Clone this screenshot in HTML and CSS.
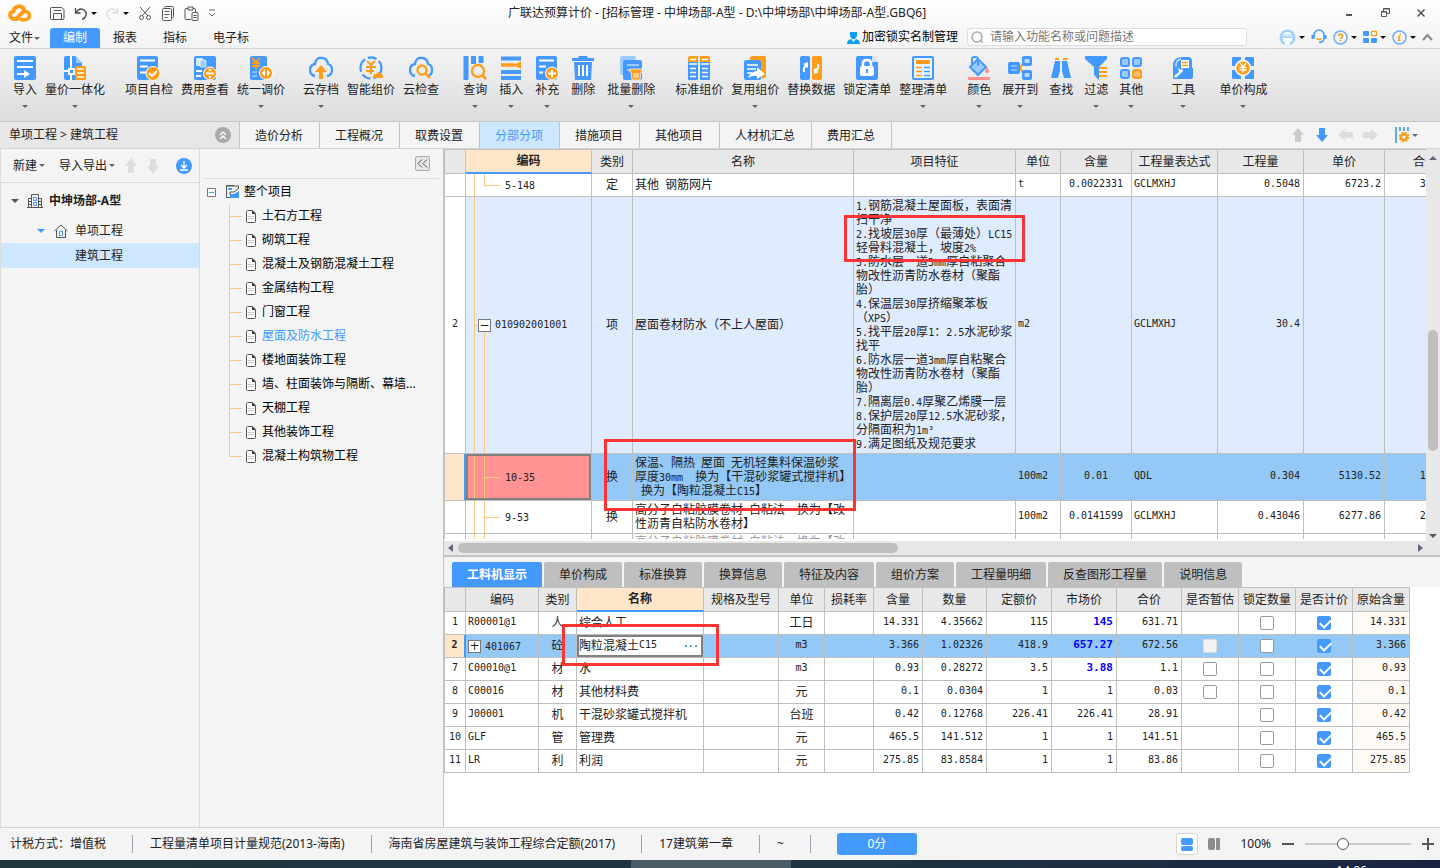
FILE: index.html
```html
<!DOCTYPE html>
<html lang="zh-CN">
<head>
<meta charset="utf-8">
<title>广联达预算计价</title>
<link rel="stylesheet" href="styles.css">
</head>
<body>
<header class="top">
  <div class="titlebar">
    <svg class="logo" width="24" height="18" viewBox="0 0 24 18" fill="none" stroke="#ff9c1a" stroke-width="4" stroke-linecap="round" stroke-linejoin="round"><path d="M9 15H5.500C1 14 1 8 5.500 7.500 6 2 12 1 15 4c3 3-1 5-3 7l-4 4"/><path d="M13 15.500c4 1 8.500 0 8.500-4 0-3-2.500-4-4.500-4" stroke-width="3.500"/></svg>
    <div class="quick">
      <button aria-label="保存"><svg width="15" height="15" viewBox="0 0 15 15" fill="none" stroke="#555"><path d="M.5 2.500q0-1 1-1h10l2.500 2v9q0 1-1 1H1.500q-1 0-1-1zM3.500 13.500v-6h8v6M4 4.500h7"/></svg></button>
      <button aria-label="撤销"><svg width="13" height="15" viewBox="0 0 13 15" fill="none" stroke="#444" stroke-width="1.300"><path d="M1.500 2v5h5M2 6.500c2-3 5-4 7-3s4 3 3 6q-1 3-4 4"/></svg><i class="caret dark"></i></button>
      <button aria-label="恢复"><svg width="13" height="15" viewBox="0 0 13 15" fill="none" stroke="#ddd" stroke-width="1.300"><path d="M11.500 2v5h-5M11 6.500c-2-3-5-4-7-3s-4 3-3 6q1 3 4 4"/></svg><i class="caret dark"></i></button>
      <button aria-label="剪切"><svg width="14" height="15" viewBox="0 0 14 15" fill="none" stroke="#555"><path d="M2 1l8 9M12 1l-8 9"/><circle cx="3.500" cy="11.500" r="2"/><circle cx="10.500" cy="11.500" r="2"/></svg></button>
      <button aria-label="复制"><svg width="14" height="15" viewBox="0 0 14 15" fill="none" stroke="#555"><path d="M3.500 3V1.500q0-1 1-1h7q1 0 1 1v9q0 1-1 1h-1"/><rect x="1.500" y="2.500" width="9" height="12" rx="1"/><path d="M3.500 5.500h5M3.500 8.500h5M3.500 11.500h3"/></svg></button>
      <button aria-label="粘贴"><svg width="15" height="15" viewBox="0 0 15 15" fill="none" stroke="#555"><path d="M7 13.500H2q-1 0-1-1v-9q0-1 1-1h2M9 2.500h1.500q1 0 1 1V6M4 1h5v3H4z"/><rect x="8" y="6.500" width="6" height="8" rx="1"/><path d="M9.500 9.500h3M9.500 11.500h3"/></svg></button>
      <button aria-label="更多"><svg width="8" height="8" viewBox="0 0 8 8" fill="none" stroke="#666"><path d="M1 1h6M1 4l3 3 3-3"/></svg></button>
    </div>
    <h1 class="wintitle">广联达预算计价 - [招标管理 - 中坤场部-A型 - D:\中坤场部\中坤场部-A型.GBQ6]</h1>
    <div class="winbtns">
      <button aria-label="最小化"><svg width="10" height="10" viewBox="0 0 10 10"><path d="M2 7h6" stroke="#555" stroke-width="2"/></svg></button>
      <button aria-label="还原"><svg width="10" height="10" viewBox="0 0 10 10" fill="none" stroke="#555"><path d="M3.500 3V.5h6v5H7M1.500 3.500h5v5h-5zM3 1h7M1 4h6"/></svg></button>
      <button aria-label="关闭"><svg width="10" height="10" viewBox="0 0 10 10"><path d="M1.500 1.500l7 7M8.500 1.500l-7 7" stroke="#444" stroke-width="1.300"/></svg></button>
    </div>
  </div>
  <div class="menubar">
    <nav class="menu">
      <button class="file">文件<i class="caret"></i></button>
      <button class="on">编制</button><button>报表</button><button>指标</button><button>电子标</button>
    </nav>
    <a class="lock" href="#"><svg width="13" height="13" viewBox="0 0 13 13" fill="#0a9ff0"><path d="M3 1h7v4L8 8H5L3 5z"/><path d="M0 13q0-4 4-5l2.500 3L9 8q4 1 4 5z"/></svg>加密锁实名制管理</a>
    <label class="search"><svg width="13" height="13" viewBox="0 0 13 13" fill="none" stroke="#aaa" stroke-width="1.500"><circle cx="6" cy="6" r="5"/><path d="M9.500 9.500L12 12"/></svg><input type="text" aria-label="搜索" placeholder="请输入功能名称或问题描述"></label>
    <div class="tools">
      <button aria-label="账户"><svg width="17" height="17" viewBox="0 0 17 17"><circle cx="8.500" cy="8.500" r="8" fill="#a5cffa"/><path d="M4 8q0-5 4.500-5T13 8v4q-1 1-2 1v3H6v-3q-1 0-2-1z" fill="#fff"/><path d="M4 5.500q4.500-2 9 0v3H4z" fill="#d3e8fd"/><path d="M5 8q3.500 1 7 0" stroke="#84bdf8" fill="none"/></svg><i class="caret dark"></i></button>
      <button aria-label="客服"><svg width="16" height="16" viewBox="0 0 16 16" fill="none" stroke="#49f" stroke-width="1.500"><path d="M3 8V6a5 5 0 0 1 10 0v2M13 9q0 4.500-5 4.500"/><path d="M2 6v4M14 6v4" stroke-width="3"/><path d="M5.500 9.500q2.500 2 5 0" stroke="#ff9c1a"/></svg></button>
      <button aria-label="帮助"><svg width="15" height="15" viewBox="0 0 15 15" fill="none" stroke="#6ab0f8" stroke-width="1.500"><circle cx="7.500" cy="7.500" r="6.500"/><path d="M5.500 6q0-2 2-2t2 2-2 2.500v.5M7.500 10v1.500" stroke="#ff9c1a"/></svg><i class="caret dark"></i></button>
      <button aria-label="应用"><svg width="14" height="14" viewBox="0 0 14 14" fill="#49f"><rect x="0" y="1" width="6" height="5" rx="1"/><rect x="0" y="8" width="6" height="5" rx="1"/><rect x="8" y="8" width="6" height="5" rx="1"/><rect x="8.500" y="1.500" width="5" height="4" fill="#fff" stroke="#ff9c1a" stroke-width="1.300"/></svg><i class="caret dark"></i></button>
      <button aria-label="关于"><svg width="15" height="15" viewBox="0 0 15 15" fill="none" stroke="#6ab0f8" stroke-width="1.500"><circle cx="7.500" cy="7.500" r="6.500"/><path d="M8.500 3.500l-.3 1.500M6 6.500h1.500l-.8 4H8.500" stroke="#ff9c1a"/></svg><i class="caret dark"></i></button>
      <button aria-label="收起功能区"><svg width="11" height="8" viewBox="0 0 11 8" fill="none" stroke="#888" stroke-width="2"><path d="M1 7l4.500-5L10 7"/></svg></button>
    </div>
  </div>
</header>

<div class="ribbon">
  <div class="group">
    <button><svg viewBox="0 0 24 24"><rect x="1" width="22" height="24" rx="2" fill="#49f"/><path d="M4 5h16M4 11h16" stroke="#fff" stroke-width="2"/><path d="M4 18h8" stroke="#fff" stroke-width="2"/><path d="M11 14l6 4-6 4z" fill="#fff"/></svg>导入<i class="caret"></i></button>
    <button><svg viewBox="0 0 24 24"><path d="M1 2q0-2 2-2h9l7 7v17H3q-2 0-2-2z" fill="#49f"/><path d="M13 0l6 7h-6z" fill="#9cccff"/><path d="M8 0v24M1 15h14" stroke="#fff" stroke-width="2"/><rect x="6" y="13" width="5" height="5" fill="#49f" stroke="#fff" stroke-width="2"/><rect x="12" y="10" width="11" height="14" rx="2" fill="#ff9c1a"/><path d="M14 13h7M14 17h7M14 21h7" stroke="#fff" stroke-width="1.500"/></svg>量价一体化<i class="caret"></i></button>
  </div>
  <div class="group">
    <button><svg viewBox="0 0 24 24"><rect width="21" height="24" rx="2" fill="#49f"/><path d="M3 4.500h15M3 10.500h8M3 16.500h6" stroke="#fff" stroke-width="2"/><circle cx="16" cy="17.500" r="7" fill="#ff9c1a" stroke="#fff"/><path d="M12 17l3 3 5-5" stroke="#fff" stroke-width="2" fill="none"/></svg>项目自检<i class="caret none"></i></button>
    <button><svg viewBox="0 0 24 24"><rect x="1" width="22" height="24" rx="2" fill="#49f"/><rect x="3" y="2" width="7" height="8" rx="1" fill="#d5eaff"/><rect x="7" y="4" width="6" height="7" rx="1" fill="#9cccff" stroke="#fff" stroke-width=".7"/><path d="M3 15h6M3 20h5" stroke="#fff" stroke-width="2"/><circle cx="17" cy="17.500" r="6.500" fill="#ff9c1a" stroke="#fff"/><path d="M13 17.500h8" stroke="#fff" stroke-width="2"/><circle cx="17" cy="14" r="1.300" fill="#fff"/><circle cx="17" cy="21" r="1.300" fill="#fff"/></svg>费用查看<i class="caret none"></i></button>
    <button><svg viewBox="0 0 24 24"><rect x="1" width="17" height="24" rx="2" fill="#49f"/><path d="M3 2l4 4 4-4M3 7h8M3 10h8M7 6v7" stroke="#ff9c1a" stroke-width="1.800" fill="none"/><path d="M3 16h5M3 20h5" stroke="#9cccff" stroke-width="1.500"/><circle cx="17" cy="17" r="6.500" fill="#ff9c1a" stroke="#fff"/><path d="M16 21v-8l-3 4zM18 13v8l3-4z" fill="#fff"/></svg>统一调价<i class="caret"></i></button>
  </div>
  <div class="group">
    <button><svg viewBox="0 0 24 24" fill="none"><path d="M6 20q-5-1-5-6t5-6q1-7 7-6 5 0 6 6 4 1 4 6t-5 6" stroke="#49f" stroke-width="2.300"/><path d="M12 9l6 7h-4v7h-4v-7H6z" fill="#ff9c1a"/></svg>云存档<i class="caret"></i></button>
    <button><svg viewBox="0 0 24 24" fill="none"><circle cx="12" cy="12" r="10.500" stroke="#49f" stroke-width="2.300" stroke-dasharray="14 3 9 3"/><path d="M8 5l4 4 4-4M7 11h10M7 15h8M12 9v9" stroke="#ff9c1a" stroke-width="2"/><path d="M14 22q0-4 3-4 3-4 5 0 3 1 2 4z" fill="#ff9c1a"/></svg>智能组价<i class="caret none"></i></button>
    <button><svg viewBox="0 0 24 24" fill="none"><path d="M6 20q-5-1-5-6t5-6q1-7 7-6 5 0 6 6 4 1 4 6t-3 5" stroke="#49f" stroke-width="2.300"/><circle cx="13" cy="14" r="4.500" stroke="#ff9c1a" stroke-width="2.300"/><path d="M16 17l5 5" stroke="#ff9c1a" stroke-width="2.300"/></svg>云检查<i class="caret none"></i></button>
  </div>
  <div class="group wide">
    <button><svg viewBox="0 0 24 24" fill="none"><path d="M3 0v24M10.500 0v8M18 0v7" stroke="#49f" stroke-width="5"/><circle cx="15" cy="15" r="6" fill="#eee" stroke="#ff9c1a" stroke-width="2.300"/><path d="M19 19l4 4" stroke="#ff9c1a" stroke-width="2.500"/></svg>查询<i class="caret"></i></button>
    <button><svg viewBox="0 0 24 24"><path d="M2 2.500h20M2 16h20M2 22h20" stroke="#49f" stroke-width="4"/><path d="M2 9h14" stroke="#ff9c1a" stroke-width="3.500"/><path d="M15 9l7-4v8z" fill="#ff9c1a"/></svg>插入<i class="caret"></i></button>
    <button><svg viewBox="0 0 24 24"><rect x="1" width="21" height="24" rx="2" fill="#49f"/><path d="M4 4.500h15M4 10.500h7M4 16.500h4" stroke="#fff" stroke-width="2"/><circle cx="17" cy="17.500" r="6.500" fill="#ff9c1a" stroke="#fff"/><path d="M13 17.500h8M17 13.500v8" stroke="#fff" stroke-width="2"/></svg>补充<i class="caret"></i></button>
    <button><svg viewBox="0 0 24 24"><path d="M1 2h6l1-2h8l1 2h6v3H1zM3 6h18l-1 18H4z" fill="#49f"/><path d="M8 9v11M12 9v11M16 9v11" stroke="#fff" stroke-width="2"/></svg>删除<i class="caret none"></i></button>
    <button><svg viewBox="0 0 24 24"><rect x="1" width="16" height="19" rx="2" fill="#9cccff"/><rect x="4" y="4" width="19" height="20" rx="2" fill="#49f"/><path d="M8 9h12M8 14h4" stroke="#9cccff" stroke-width="2"/><path d="M11 13h12v3h-1l-1 8h-8l-1-8h-1z" fill="#ff9c1a" stroke="#fff" stroke-width=".7"/><path d="M15 17v5M17 17v5M19 17v5" stroke="#fff"/></svg>批量删除<i class="caret"></i></button>
  </div>
  <div class="group">
    <button><svg viewBox="0 0 24 24"><rect x="1" y="5" width="10" height="19" rx="1" fill="#49f"/><rect x="13" y="5" width="10" height="19" rx="1" fill="#49f"/><path d="M1 2q0-2 2-2h8v6H1zM13 0h8q2 0 2 2v4H13z" fill="#ff9c1a"/><path d="M3 3.500h6M15 3.500h6M2 8h8M14 8h8M3 12.500h6M15 12.500h6M3 16.500h6M15 16.500h6M3 20.500h6M15 20.500h6" stroke="#fff" stroke-width="1.500"/></svg>标准组价<i class="caret none"></i></button>
    <button><svg viewBox="0 0 24 24"><rect x="7" width="16" height="22" rx="2" fill="#ff9c1a"/><rect x="1" y="4" width="17" height="20" rx="2" fill="#49f"/><path d="M4 9h11M4 13h9M4 17h5" stroke="#fff" stroke-width="1.500"/><path d="M5 22q3-7 9-7v-4l8 7-8 5v-3q-4-1-9 2z" fill="#fff"/></svg>复用组价<i class="caret"></i></button>
    <button><svg viewBox="0 0 24 24"><rect x="1" width="10" height="24" rx="2" fill="#49f"/><rect x="13" width="10" height="24" rx="2" fill="#ff9c1a"/><path d="M4 16q-1-5 2-7L4 8l5-2v6L7 11q-2 2-1 5zM20 8q1 5-2 7l2 1-5 2v-6l2 1q2-2 1-5z" fill="#fff"/></svg>替换数据<i class="caret none"></i></button>
    <button><svg viewBox="0 0 24 24"><path d="M1 2q0-2 2-2h14l6 6v16q0 2-2 2H3q-2 0-2-2z" fill="#49f"/><path d="M17 0v6h6z" fill="#cfe6ff"/><path d="M8 11V7q0-3 4-3t4 3v4" stroke="#fff" stroke-width="2.500" fill="none"/><rect x="5" y="10" width="14" height="10" rx="2" fill="#fff"/><path d="M12 13v4" stroke="#49f" stroke-width="2"/></svg>锁定清单<i class="caret none"></i></button>
    <button><svg viewBox="0 0 24 24"><rect x="2" y="1" width="20" height="22" rx="1" fill="#e9f4ff" stroke="#49f" stroke-width="2"/><path d="M5 6h14" stroke="#ff9c1a" stroke-width="4"/><path d="M5 11.500h6M5 15.500h6M5 19.500h6" stroke="#ff9c1a" stroke-width="1.700"/><path d="M13 11.500h6M13 15.500h6M13 19.500h6" stroke="#49f" stroke-width="1.700"/></svg>整理清单<i class="caret"></i></button>
  </div>
  <div class="group mid">
    <button><svg viewBox="0 0 24 24"><path d="M11 3l8 8-8 8-8-8z" fill="#9cccff" stroke="#49f" stroke-width="2"/><path d="M5 8V3q0-2 3-2t3 2v7" fill="none" stroke="#49f" stroke-width="2"/><path d="M20 11q4 6 0 6t0-6z" fill="#ff8f8f"/><path d="M1 22.500h22" stroke="#ff8f8f" stroke-width="3"/></svg>颜色<i class="caret"></i></button>
    <button><svg viewBox="0 0 24 24"><path d="M12 12l5-7M12 12l5 8" stroke="#ff9c1a" stroke-width="2"/><rect y="6" width="12" height="12" rx="2" fill="#49f"/><rect x="14" width="10" height="10" rx="2" fill="#49f"/><rect x="14" y="14" width="10" height="10" rx="2" fill="#49f"/><path d="M3 10h6M3 14h6M17 3.500h4v3h-4zM17 17.500h4v3h-4z" stroke="#b8dbff" fill="#b8dbff"/></svg>展开到<i class="caret"></i></button>
    <button><svg viewBox="0 0 24 24"><path d="M6 5h5v10l-2 7H2zM13 5h5l4 17h-7l-2-7z" fill="#49f"/><path d="M6 3h4M14 3h4" stroke="#ff9c1a" stroke-width="2"/></svg>查找<i class="caret none"></i></button>
    <button><svg viewBox="0 0 24 24"><path d="M1 0h22v3l-8 8v13l-5-5v-8L1 3z" fill="#49f"/><path d="M15 12h8M15 16h8M15 20h8" stroke="#ff9c1a" stroke-width="2"/></svg>过滤<i class="caret"></i></button>
    <button><svg viewBox="0 0 24 24" stroke-width="2" fill="#9cccff" stroke="#49f"><rect x="2" y="2" width="8" height="8" rx="2"/><rect x="14" y="2" width="8" height="8" rx="2"/><rect x="2" y="14" width="8" height="8" rx="2"/><rect x="14" y="14" width="8" height="8" rx="2" fill="#ffbd66" stroke="#ff9c1a"/></svg>其他<i class="caret"></i></button>
  </div>
  <div class="group far">
    <button><svg viewBox="0 0 24 24"><path d="M2 8q1-7 9-7h7q3 1 3 4v7h1v9q0 2-2 2H4q-2 0-2-2z" fill="#49f"/><path d="M5 11V9q0-5 5-6" stroke="#cfe6ff" stroke-width="1.300" fill="none"/><path d="M10 4h8v8h-8z" fill="#fff"/><path d="M11 6.500h6M11 9.500h6" stroke="#ff9c1a" stroke-width="1.500"/><path d="M3 20l5-4-1-4 3 2 1-2 1 3-3 3-4 4z" fill="#fff"/></svg>工具<i class="caret"></i></button>
  </div>
  <div class="group wide">
    <button><svg viewBox="0 0 24 24"><rect x="1" y="1" width="22" height="22" rx="1" fill="#49f"/><path d="M12 0v24M0 12h24" stroke="#eee" stroke-width="4"/><circle cx="12" cy="12" r="7.500" fill="#ff9c1a" stroke="#fff" stroke-width="1.500"/><path d="M9 7l3 4 3-4M8.500 11.500h7M8.500 14h7M12 11v6" stroke="#fff" stroke-width="1.300" fill="none"/></svg>单价构成<i class="caret"></i></button>
  </div>
</div>

<div class="navrow">
  <div class="crumb"><span>单项工程 &gt; 建筑工程</span><button aria-label="收起"><svg width="16" height="16" viewBox="0 0 16 16" fill="none"><circle cx="8" cy="8" r="8" fill="#aaa"/><path d="M5 8l3-3 3 3M5 12l3-3 3 3" stroke="#fff" stroke-width="1.300"/></svg></button></div>
  <nav class="tabs"><button>造价分析</button><button>工程概况</button><button>取费设置</button><button class="on">分部分项</button><button>措施项目</button><button>其他项目</button><button>人材机汇总</button><button>费用汇总</button></nav>
  <div class="navtools">
    <button aria-label="上移"><svg width="16" height="16" viewBox="0 0 16 16" fill="#ccc"><path d="M8 1l6 7h-3v7H5V8H2z"/></svg></button>
    <button aria-label="下移"><svg width="16" height="16" viewBox="0 0 16 16" fill="#49f"><path d="M8 15l6-7h-3V1H5v7H2z"/></svg></button>
    <button aria-label="升级"><svg width="16" height="16" viewBox="0 0 16 16" fill="#ddd"><path d="M0 8l7-6v3h8v6H7v3z"/></svg></button>
    <button aria-label="降级"><svg width="16" height="16" viewBox="0 0 16 16" fill="#ddd"><path d="M16 8L9 2v3H1v6h8v3z"/></svg></button>
    <button class="cfg" aria-label="页面设置"><svg width="16" height="16" viewBox="0 0 16 16" fill="none"><path d="M2 0v16M6 0v4M10 0v4M14 0v4" stroke="#49f" stroke-width="1.700"/><circle cx="10" cy="10" r="3" stroke="#ff9c1a" stroke-width="2.500"/><circle cx="10" cy="10" r="4.500" stroke="#ff9c1a" stroke-width="1.500" stroke-dasharray="2 1.530"/></svg><i class="caret"></i></button>
  </div>
</div>

<main class="work">
  <aside class="projects">
    <div class="ptools">
      <button>新建<i class="caret"></i></button>
      <button class="io">导入导出<i class="caret"></i></button>
      <button aria-label="上移"><svg width="16" height="16" viewBox="0 0 16 16" fill="#ddd"><path d="M8 0l6 8h-3v7H5V8H2z"/></svg></button>
      <button class="down" aria-label="下移"><svg width="16" height="16" viewBox="0 0 16 16" fill="#ddd"><path d="M8 16l6-8h-3V1H5v7H2z"/></svg></button>
      <button class="dl" aria-label="下载"><svg width="16" height="16" viewBox="0 0 16 16" fill="none"><circle cx="8" cy="8" r="8" fill="#49f"/><path d="M8 3v7M5 7l3 3 3-3M4 12h8" stroke="#fff" stroke-width="1.300"/></svg></button>
    </div>
    <ul class="ptree">
      <li class="root"><i class="caret big"></i><svg width="16" height="16" viewBox="0 0 16 16" fill="none" stroke="#555"><path d="M4.500 14V1.500h7V14M4 5.500H1.500V14M12 5.500h2.500V14M0 14.500h16M2 8.500h2M2 11.500h2M12 8.500h2M12 11.500h2"/><path d="M6.500 4.500h3v3h-3zM6.500 9.500h3v3h-3z" stroke="#49f"/></svg>中坤场部-A型</li>
      <li class="unit"><i class="caret big blue"></i><svg width="14" height="14" viewBox="0 0 14 14" fill="none" stroke="#555"><path d="M.5 7L7 1l6.500 6M2.500 6v7.500h9V6"/><path d="M5.500 7.500h3v4h-3z" stroke="#49f"/></svg>单项工程</li>
      <li class="leaf">建筑工程</li>
    </ul>
  </aside>
  <aside class="sections">
    <div class="stools"><button aria-label="折叠"><svg width="11" height="9" viewBox="0 0 11 9" fill="none" stroke="#555"><path d="M5 .5l-4 4 4 4M10 .5l-4 4 4 4"/></svg></button></div>
    <div class="sroot"><svg width="9" height="9" viewBox="0 0 9 9" fill="#fff" stroke="#777"><path d="M.5.5h8v8h-8z"/><path d="M2 4.500h5" stroke="#49a0d0"/></svg><svg width="14" height="14" viewBox="0 0 14 14" fill="none"><path d="M8 .5H.5v12H5M.5 1h12V4" stroke="#555"/><path d="M2 3h4v2H2zM4 13V9h4l5-3v7z" fill="#49f"/><path d="M4 10V7h4l5-4" stroke="#555"/></svg>整个项目</div>
    <ul class="stree">
      <li><svg><use href="#doc"/></svg>土石方工程</li>
      <li><svg><use href="#doc"/></svg>砌筑工程</li>
      <li><svg><use href="#doc"/></svg>混凝土及钢筋混凝土工程</li>
      <li><svg><use href="#doc"/></svg>金属结构工程</li>
      <li><svg><use href="#doc"/></svg>门窗工程</li>
      <li class="on"><svg><use href="#doc"/></svg>屋面及防水工程</li>
      <li><svg><use href="#doc"/></svg>楼地面装饰工程</li>
      <li><svg><use href="#doc"/></svg>墙、柱面装饰与隔断、幕墙...</li>
      <li><svg><use href="#doc"/></svg>天棚工程</li>
      <li><svg><use href="#doc"/></svg>其他装饰工程</li>
      <li><svg><use href="#doc"/></svg>混凝土构筑物工程</li>
    </ul>
  </aside>
  <section class="content">
    <div class="upper">
      <div class="gridrow">
        <div class="clip">
          <table class="grid main">
            <colgroup><col class="w22"><col class="w126"><col class="w41"><col class="w221"><col class="w162"><col class="w45"><col class="w71"><col class="w86"><col class="w86"><col class="w81"><col class="w81"></colgroup>
            <thead><tr><th></th><th class="cur">编码</th><th>类别</th><th>名称</th><th>项目特征</th><th>单位</th><th>含量</th><th>工程量表达式</th><th>工程量</th><th>单价</th><th>合价</th></tr></thead>
            <tbody>
              <tr class="r1"><td></td><td class="code t1"><span class="n">5-148</span></td><td class="c">定</td><td>其他<span class="n">&nbsp;</span>钢筋网片</td><td></td><td class="n">t</td><td class="c n">0.0022331</td><td class="n">GCLMXHJ</td><td class="r n">0.5048</td><td class="r n">6723.2</td><td class="r n">3393.87</td></tr>
              <tr class="r2"><td class="c n">2</td><td class="code t2"><i class="box">−</i><span class="n">010902001001</span></td><td class="c">项</td><td>屋面卷材防水（不上人屋面）</td><td><span class="n">1.</span>钢筋混凝土屋面板，表面清<br>扫干净<br><span class="n">2.</span>找坡层<span class="n">30</span>厚（最薄处）<span class="n">LC15</span><br>轻骨料混凝土，坡度<span class="n">2%</span><br><span class="n">3.</span>防水层一道<span class="n">3mm</span>厚自粘聚合<br>物改性沥青防水卷材（聚酯<br>胎）<br><span class="n">4.</span>保温层<span class="n">30</span>厚挤缩聚苯板<br>（<span class="n">XPS</span>）<br><span class="n">5.</span>找平层<span class="n">20</span>厚<span class="n">1</span>：<span class="n">2.5</span>水泥砂浆<br>找平<br><span class="n">6.</span>防水层一道<span class="n">3mm</span>厚自粘聚合<br>物改性沥青防水卷材（聚酯<br>胎）<br><span class="n">7.</span>隔离层<span class="n">0.4</span>厚聚乙烯膜一层<br><span class="n">8.</span>保护层<span class="n">20</span>厚<span class="n">12.5</span>水泥砂浆，<br>分隔面积为<span class="n">1m³</span><br><span class="n">9.</span>满足图纸及规范要求</td><td class="n">m2</td><td></td><td class="n">GCLMXHJ</td><td class="r n">30.4</td><td></td><td></td></tr>
              <tr class="r3"><td></td><td class="code t3"><span class="n">10-35</span></td><td class="c">换</td><td>保温、隔热<span class="n">&nbsp;</span>屋面<span class="n">&nbsp;</span>无机轻集料保温砂浆<br>厚度<span class="n">30mm&nbsp;&nbsp;</span>换为【干混砂浆罐式搅拌机】<br><span class="n">&nbsp;</span>换为【陶粒混凝土<span class="n">C15</span>】</td><td></td><td class="n">100m2</td><td class="c n">0.01</td><td class="n">QDL</td><td class="r n">0.304</td><td class="r n">5130.52</td><td class="r n">1559.68</td></tr>
              <tr class="r4"><td></td><td class="code t3"><span class="n">9-53</span></td><td class="c">换</td><td>高分子自粘胶膜卷材<span class="n">&nbsp;</span>自粘法<span class="n">&nbsp;&nbsp;</span>换为【改<br>性沥青自粘防水卷材】</td><td></td><td class="n">100m2</td><td class="c n">0.0141599</td><td class="n">GCLMXHJ</td><td class="r n">0.43046</td><td class="r n">6277.86</td><td class="r n">2702.37</td></tr>
              <tr class="part"><td></td><td class="code t4"></td><td></td><td>高分子自粘胶膜卷材<span class="n">&nbsp;</span>自粘法<span class="n">&nbsp;&nbsp;</span>换为【改</td><td></td><td></td><td></td><td></td><td></td><td></td><td></td></tr>
            </tbody>
          </table>
        </div>
        <div class="vbar"><i class="caret up"></i><b></b><i class="caret big"></i></div>
      </div>
      <div class="hbar"><i class="caret left"></i><b></b><i class="caret right"></i></div>
      <div class="mark m1"></div><div class="mark m2"></div>
    </div>
    <nav class="subtabs"><button class="on">工料机显示</button><button>单价构成</button><button>标准换算</button><button>换算信息</button><button>特征及内容</button><button>组价方案</button><button>工程量明细</button><button>反查图形工程量</button><button>说明信息</button></nav>
    <div class="lower">
      <table class="grid detail">
        <colgroup><col class="w22"><col class="w73"><col class="w38"><col class="w127"><col class="w75"><col class="w46"><col class="w49"><col class="w49"><col class="w64"><col class="w65"><col class="w65"><col class="w65"><col class="w57"><col class="w57"><col class="w57"><col class="w57"></colgroup>
        <thead><tr><th></th><th>编码</th><th>类别</th><th class="cur">名称</th><th>规格及型号</th><th>单位</th><th>损耗率</th><th>含量</th><th>数量</th><th>定额价</th><th>市场价</th><th>合价</th><th>是否暂估</th><th>锁定数量</th><th>是否计价</th><th>原始含量</th></tr></thead>
        <tbody>
          <tr><td class="c n">1</td><td class="n">R00001@1</td><td class="c">人</td><td>综合人工</td><td></td><td class="c">工日</td><td></td><td class="r n">14.331</td><td class="r n">4.35662</td><td class="r n">115</td><td class="r n hot">145</td><td class="r n">631.71</td><td></td><td class="c"><input type="checkbox" aria-label="锁定数量"></td><td class="c"><input type="checkbox" aria-label="是否计价" checked></td><td class="r n orig">14.331</td></tr>
          <tr class="sel"><td class="c n">2</td><td><i class="box">+</i><span class="n">401067</span></td><td class="c">砼</td><td class="edit"><div>陶粒混凝土<span class="n">C15</span><button aria-label="选择"><svg width="12" height="3" viewBox="0 0 12 3" fill="#49a0e0"><path d="M0 0h2v2H0zM5 0h2v2H5zM10 0h2v2h-2z"/></svg></button></div></td><td></td><td class="c n">m3</td><td></td><td class="r n">3.366</td><td class="r n">1.02326</td><td class="r n">418.9</td><td class="r n hot">657.27</td><td class="r n">672.56</td><td class="c"><input type="checkbox" aria-label="是否暂估" disabled></td><td class="c"><input type="checkbox" aria-label="锁定数量"></td><td class="c"><input type="checkbox" aria-label="是否计价" checked></td><td class="r n">3.366</td></tr>
          <tr><td class="c n">7</td><td class="n">C00010@1</td><td class="c">材</td><td>水</td><td></td><td class="c n">m3</td><td></td><td class="r n">0.93</td><td class="r n">0.28272</td><td class="r n">3.5</td><td class="r n hot">3.88</td><td class="r n">1.1</td><td class="c"><input type="checkbox" aria-label="是否暂估"></td><td class="c"><input type="checkbox" aria-label="锁定数量"></td><td class="c"><input type="checkbox" aria-label="是否计价" checked></td><td class="r n orig">0.93</td></tr>
          <tr><td class="c n">8</td><td class="n">C00016</td><td class="c">材</td><td>其他材料费</td><td></td><td class="c">元</td><td></td><td class="r n">0.1</td><td class="r n">0.0304</td><td class="r n">1</td><td class="r n">1</td><td class="r n">0.03</td><td class="c"><input type="checkbox" aria-label="是否暂估"></td><td class="c"><input type="checkbox" aria-label="锁定数量"></td><td class="c"><input type="checkbox" aria-label="是否计价" checked></td><td class="r n orig">0.1</td></tr>
          <tr><td class="c n">9</td><td class="n">J00001</td><td class="c">机</td><td>干混砂浆罐式搅拌机</td><td></td><td class="c">台班</td><td></td><td class="r n">0.42</td><td class="r n">0.12768</td><td class="r n">226.41</td><td class="r n">226.41</td><td class="r n">28.91</td><td></td><td class="c"><input type="checkbox" aria-label="锁定数量"></td><td class="c"><input type="checkbox" aria-label="是否计价" checked></td><td class="r n orig">0.42</td></tr>
          <tr><td class="c n">10</td><td class="n">GLF</td><td class="c">管</td><td>管理费</td><td></td><td class="c">元</td><td></td><td class="r n">465.5</td><td class="r n">141.512</td><td class="r n">1</td><td class="r n">1</td><td class="r n">141.51</td><td></td><td class="c"><input type="checkbox" aria-label="锁定数量"></td><td class="c"><input type="checkbox" aria-label="是否计价" checked></td><td class="r n orig">465.5</td></tr>
          <tr><td class="c n">11</td><td class="n">LR</td><td class="c">利</td><td>利润</td><td></td><td class="c">元</td><td></td><td class="r n">275.85</td><td class="r n">83.8584</td><td class="r n">1</td><td class="r n">1</td><td class="r n">83.86</td><td></td><td class="c"><input type="checkbox" aria-label="锁定数量"></td><td class="c"><input type="checkbox" aria-label="是否计价" checked></td><td class="r n orig">275.85</td></tr>
        </tbody>
      </table>
      <div class="mark m3"></div>
    </div>
  </section>
</main>

<footer class="status">
  <div class="facts"><span>计税方式：增值税</span><span>工程量清单项目计量规范(2013-海南)</span><span>海南省房屋建筑与装饰工程综合定额(2017)</span><span>17建筑第一章</span><span>~</span></div>
  <button class="score">0分</button>
  <div class="zoom">
    <button class="view on" aria-label="上下布局"><svg width="12" height="13" viewBox="0 0 12 13" fill="#49f"><rect width="12" height="7" rx="2"/><rect y="8" width="12" height="5" rx="2"/></svg></button>
    <button class="view" aria-label="左右布局"><svg width="12" height="12" viewBox="0 0 12 12" fill="#8c8c8c"><rect width="7" height="12" rx="2"/><rect x="8" width="4" height="12" rx="1"/></svg></button>
    <span class="pct">100%</span>
    <button aria-label="缩小"><svg width="12" height="12" viewBox="0 0 12 12"><path d="M0 6h12" stroke="#555" stroke-width="2"/></svg></button>
    <input type="range" aria-label="缩放" min="0" max="100" value="34">
    <button aria-label="放大"><svg width="12" height="12" viewBox="0 0 12 12"><path d="M0 6h12M6 0v12" stroke="#555" stroke-width="2"/></svg></button>
  </div>
</footer>
<div class="taskbar"><div class="task"></div><time>14:06</time></div>
<svg class="defs" aria-hidden="true"><symbol id="doc" viewBox="0 0 10 13"><path d="M.5 1.500q0-1 1-1h5l3 3v8q0 1-1 1h-7q-1 0-1-1z" fill="#fff" stroke="#555"/><path d="M6 0v4h4z" fill="#444"/><path d="M2 6.500h6M2 8.500h6" stroke="#ccc"/></symbol></svg>
</body>
</html>
```
FILE: styles.css
```css
* { box-sizing: border-box; }
html, body { height: 100%; margin: 0; }
body {
  display: flex; flex-direction: column; overflow: hidden;
  font: 12px/16px "Noto Sans", "Noto Sans CJK SC", sans-serif; color: #222; background: #f4f4f4;
}
button { font: inherit; color: inherit; background: none; border: 0; padding: 0; margin: 0; white-space: nowrap; }
ul { list-style: none; margin: 0; padding: 0; }
svg { flex: none; display: block; }
.defs { position: absolute; width: 0; height: 0; }
.caret { display: inline-block; flex: none; width: 0; height: 0; border: 3px solid transparent; border-top-color: #666; border-bottom: 0; }
.caret.dark { border-top-color: #111; }
.caret.big { border-width: 4px 4px 0; border-top-color: #555; }
.caret.blue { border-top-color: #49f; }
.caret.none { visibility: hidden; }
.caret.up { border: 4px solid transparent; border-bottom-color: #667; border-top: 0; }
.caret.left { border: 4px solid transparent; border-right: 5px solid #667; border-left: 0; }
.caret.right { border: 4px solid transparent; border-left: 5px solid #667; border-right: 0; }

/* title and menu */
.top { flex: none; background: linear-gradient(#fff, #f3f3f3); border-bottom: 1px solid #d6d6d6; }
.titlebar { display: grid; grid-template-columns: 1fr auto 1fr; align-items: center; height: 26px; padding: 0 14px 0 8px; grid-template-areas: "q t w"; }
.logo { grid-area: q; }
.quick { grid-area: q; display: flex; align-items: center; gap: 9px; margin-left: 42px; }
.quick button { display: flex; align-items: center; gap: 4px; }
.wintitle { grid-area: t; margin: 0; font-size: 12px; font-weight: 400; }
.winbtns { grid-area: w; display: flex; justify-content: flex-end; gap: 26px; }
.menubar { display: flex; align-items: center; height: 22px; padding-right: 7px; }
.menu { display: flex; flex: 1; align-self: flex-end; height: 20px; }
.menu button { padding: 0 13px; }
.menu .file { display: flex; align-items: center; gap: 1px; width: 50px; padding: 0 0 0 9px; }
.menu .on { background: #49f; color: #fff; border-radius: 3px 3px 0 0; }
.lock { display: flex; align-items: center; gap: 2px; color: #000; text-decoration: none; margin-right: 9px; }
.search { display: flex; align-items: center; gap: 6px; width: 280px; height: 18px; padding: 0 3px; background: #fff; border: 1px solid #ddd; border-radius: 3px; margin-right: 32px; }
.search input { flex: 1; min-width: 0; border: 0; padding: 0; outline: 0; font: inherit; background: none; }
.search input::placeholder { color: #777; opacity: 1; }
.tools { display: flex; align-items: center; gap: 6px; }
.tools button { display: flex; align-items: center; gap: 3px; }

/* ribbon */
.ribbon { flex: none; display: flex; height: 73px; padding: 7px 0 0 13px; background: linear-gradient(#f3f3f3, #ddd); border-bottom: 1px solid #c8c8c8; }
.group { display: flex; gap: 8px; margin-right: 20px; align-items: flex-start; }
.group:nth-child(2) { margin-right: 18px; }
.group:nth-child(3) { margin-right: 24px; }
.group.wide { gap: 12px; }
.group.mid { gap: 11px; margin-right: 28px; }
.group.far { margin-right: 24px; }
.ribbon button { display: flex; flex-direction: column; align-items: center; line-height: 20px; }
.ribbon svg { width: 24px; height: 24px; }
.ribbon .caret { margin-top: 5px; }

/* page tabs */
.navrow { flex: none; display: flex; height: 27px; border-bottom: 1px solid #d4d4d4; }
.crumb { display: flex; justify-content: space-between; align-items: center; width: 240px; padding: 0 8px 0 9px; background: #e7e7e7; border-right: 1px solid #c8c8c8; }
.tabs { display: flex; flex: 1; }
.tabs button { min-width: 80px; padding: 2px 16px 0 15px; border-right: 1px solid #c4c4c4; }
.tabs .on { background: #cce7ff; color: #49f; }
.navtools { display: flex; align-items: center; gap: 8px; padding-right: 22px; }
.navtools .cfg { display: flex; align-items: center; gap: 2px; margin-left: 8px; }

/* side panels */
.work { flex: 1; min-height: 0; display: flex; border-bottom: 1px solid #d4d4d4; }
.projects { flex: none; width: 200px; border-right: 1px solid #d8d8d8; border-left: 1px solid #ddd; }
.ptools { display: flex; align-items: center; height: 34px; padding: 0 7px 0 12px; border-bottom: 1px solid #d8d8d8; }
.ptools button { display: flex; align-items: center; gap: 2px; }
.ptools .io { margin: 0 8px 0 14px; }
.ptools .down { margin-left: 6px; }
.ptools .dl { margin-left: auto; }
.ptree li { display: flex; align-items: center; height: 25px; }
.ptree .root { height: 35px; padding-left: 10px; font-weight: 700; gap: 6px; }
.ptree .root svg { margin-left: 2px; }
.ptree .unit { padding-left: 36px; gap: 7px; }
.ptree .unit svg { margin-left: 2px; }
.ptree .leaf { padding-left: 74px; background: #cce7ff; }
.sections { flex: none; width: 244px; border-right: 1px solid #c4c4c4; }
.stools { display: flex; justify-content: flex-end; align-items: center; height: 30px; margin: 0 4px 0 2px; padding-right: 9px; border-bottom: 1px solid #ddd; }
.stools button { display: grid; place-items: center; width: 15px; height: 15px; border: 1px solid #aaa; border-radius: 2px; background: #e7e7e7; }
.sroot { display: flex; align-items: center; height: 24px; margin-top: 1px; padding-left: 7px; gap: 4px; color: #000; }
.sroot svg + svg { margin-left: 6px; }
.stree { color: #000; padding-left: 29px; }
.stree li {
  display: flex; align-items: center; gap: 6px; height: 24px; padding-left: 17px;
  background: linear-gradient(#fdc87f, #fdc87f) 0 0 / 1px 100% no-repeat, linear-gradient(#fdc87f, #fdc87f) 0 12px / 13px 1px no-repeat;
}
.stree li:last-child { background-size: 1px 13px, 13px 1px; }
.stree svg { width: 10px; height: 13px; }
.stree .on { color: #49f; }

/* grids */
.content { flex: 1; min-width: 0; display: flex; flex-direction: column; background: #fff; }
.upper { position: relative; flex: none; }
.gridrow { display: flex; height: 392px; }
.clip { flex: 1; min-width: 0; height: 390px; overflow: hidden; }
.grid { table-layout: fixed; border-spacing: 0; border-top: 1px solid #bfbfbf; font-family: "Noto Sans CJK SC", sans-serif; line-height: 14px; white-space: nowrap; }
.main { width: 1002px; }
.detail { width: 966px; }
.grid th, .grid td { padding: 0 2px 2px; border: 0 solid #bfbfbf; border-width: 0 1px 1px 0; overflow: hidden; text-align: left; }
.grid tr > :first-child { border-left-width: 1px; padding: 0 0 2px; }
.grid th { height: 24px; background: #e8e8e8; font-weight: 400; text-align: center; }
.grid .cur { background: #ffe6c8; font-weight: 700; border-bottom: 2px solid #49f; }
.grid .c { text-align: center; }
.grid .r { text-align: right; padding-right: 3px; }
.grid .n { font-family: "DejaVu Sans Mono", monospace; font-size: 10px; }
.grid span.n { line-height: 0; }
.w22 { width: 22px; } .w38 { width: 38px; } .w41 { width: 41px; } .w45 { width: 45px; } .w46 { width: 46px; }
.w49 { width: 49px; } .w57 { width: 57px; } .w64 { width: 64px; } .w65 { width: 65px; } .w71 { width: 71px; }
.w73 { width: 73px; } .w75 { width: 75px; } .w81 { width: 81px; } .w86 { width: 86px; } .w126 { width: 126px; }
.w127 { width: 127px; } .w162 { width: 162px; } .w221 { width: 221px; }
.r1 td { height: 23px; }
.r2 td { height: 257px; background-color: #dfebff; }
.r2 td:first-child { background: #fff; }
.r3 td { height: 47px; background-color: #93c8f7; }
.r3 td:first-child, .sel td:first-child { background: #ffe6c8; border-right: 2px solid #49f; }
.r4 td { height: 33px; }
.part { color: #999; }
.grid .code { padding-left: 39px; --o: linear-gradient(#fdc87f, #fdc87f); background-repeat: no-repeat; }
.t1 { background-image: var(--o), var(--o), var(--o); background-size: 1px 100%, 1px 50%, 16px 1px; background-position: 8px 0, 18px 0, 18px 50%; }
.grid .t2 { padding-left: 12px; background-image: var(--o), var(--o), var(--o); background-size: 1px 100%, 1px 50%, 4px 1px; background-position: 8px 0, 18px 100%, 8px 50%; }
.t3 { background-image: var(--o), var(--o), var(--o); background-size: 1px 100%, 1px 100%, 16px 1px; background-position: 8px 0, 18px 0, 18px 50%; }
.t4 { background-image: var(--o), var(--o); background-size: 1px 100%; background-position: 8px 0, 18px 0; }
.r3 .code { background-color: #ff9393; box-shadow: inset 0 0 0 2px #808080; }
.box { display: inline-block; width: 13px; height: 13px; margin-right: 4px; border: 1px solid #777; background: #fff; font: 12px/10px "DejaVu Sans", sans-serif; text-align: center; vertical-align: middle; }
.vbar { width: 14px; display: flex; flex-direction: column; align-items: center; background: #e8e8e8; padding: 7px 0 3px; }
.vbar b { width: 10px; height: 121px; margin: 170px 0 auto; border-radius: 5px; background: #bfbfbf; }
.hbar { display: flex; align-items: center; height: 16px; padding: 0 17px 0 4px; background: #e8e8e8; border-bottom: 2px solid #c2c2c2; }
.hbar b { width: 440px; height: 10px; margin: 0 auto 0 5px; border-radius: 5px; background: #bfbfbf; }
.mark { position: absolute; border: 3px solid #fa3534; }
.m1 { left: 400px; top: 66px; width: 181px; height: 47px; }
.m2 { left: 160px; top: 290px; width: 252px; height: 72px; }
.m3 { left: 118px; top: 37px; width: 157px; height: 42px; }
.subtabs { flex: none; display: flex; gap: 2px; padding: 5px 8px 0; background: #f4f4f4; }
.subtabs button { height: 25px; padding: 0 15px; background: #bfbfbf; border-radius: 2px 2px 0 0; }
.subtabs .on { background: #49f; color: #fff; font-weight: 700; }
.lower { position: relative; flex: 1; }
.detail td { height: 23px; line-height: 18px; }
.detail .hot { color: #00f; font-weight: 700; font-size: 11px; }
.sel td { background: #93c8f7; }
.sel td:first-child { font-weight: 700; }
.orig { background: #fffaf5; }
.sel .edit { padding: 0; }
.edit div { display: flex; align-items: center; height: 22px; padding-bottom: 2px; border: 2px solid #808080; background: #fff; }
.edit button { margin: 2px 4px 0 auto; }
.grid input { appearance: none; display: block; width: 14px; height: 14px; margin: 2px auto 0; border: 1px solid #999; border-radius: 2px; background: #fff; }
.grid input:disabled { border-color: #ddd; background: #f2f2f2; }
.grid input:checked { border-color: #49f; background: #49f; }
.grid input:checked::after { content: ""; display: block; width: 9px; height: 5px; margin: 2px 0 0 2px; border: 2px solid #fff; border-width: 0 0 2px 2px; transform: rotate(-45deg); }

/* status bar */
.status { flex: none; display: flex; align-items: center; height: 32px; padding-right: 6px; }
.facts { display: flex; align-items: center; }
.facts span { padding: 0 26px 0 17px; border-right: 1px solid #9aa3b5; line-height: 18px; }
.facts span:first-child { padding-left: 10px; }
.score { width: 80px; height: 22px; margin-left: 26px; border-radius: 3px; background: #49f; color: #fff; }
.zoom { display: flex; align-items: center; margin-left: auto; }
.view { display: grid; place-items: center; width: 22px; height: 22px; border: 1px solid transparent; border-radius: 3px; margin-right: 5px; }
.view.on { background: #fff; border-color: #d4d4d4; }
.pct { margin: 0 11px 0 10px; font-size: 12px; }
.zoom input { appearance: none; width: 106px; height: 12px; margin: 0 11px; background: linear-gradient(#c8c8c8, #c8c8c8) 0 5px / 100% 2px no-repeat; }
.zoom input::-webkit-slider-thumb { appearance: none; width: 12px; height: 12px; border: 1px solid #555; border-radius: 50%; background: #fff; }
.taskbar { flex: none; position: relative; height: 8px; overflow: hidden; background: linear-gradient(90deg, #21373f, #1e3440 60%, #1a2442); }
.task { width: 160px; height: 8px; margin-left: 631px; background: #4a5c66; }
.taskbar time { position: absolute; right: 73px; top: 3px; color: #fff; }
```
